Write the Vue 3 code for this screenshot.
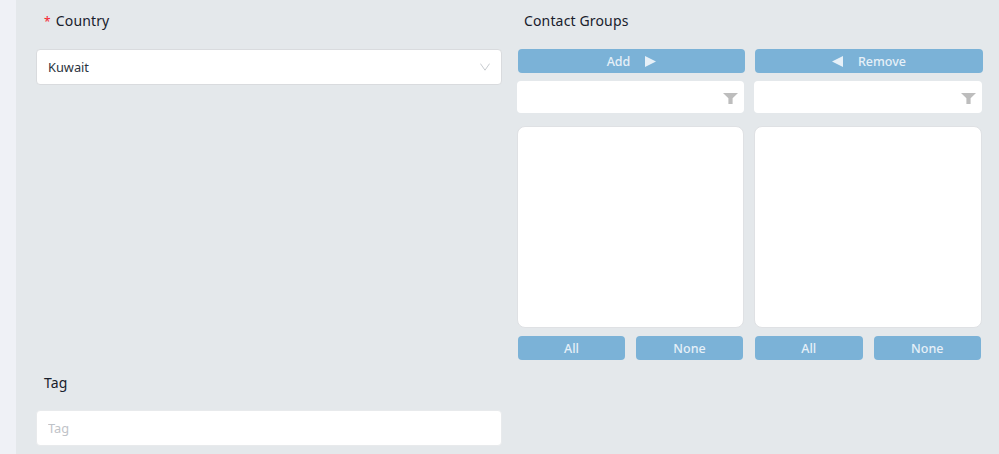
<script setup>
const panes = [
  { action: 'Add', dir: 'right' },
  { action: 'Remove', dir: 'left' },
]
</script>

<template>
  <div class="page">
    <div class="strip"></div>
    <main class="form">
      <section class="left">
        <div class="label-row country-label"><span class="req">*</span>Country</div>
        <div class="select">
          <span>Kuwait</span>
          <svg class="chev" width="10" height="8" viewBox="0 0 10 8"><path d="M.4.6 5 7.2 9.6.6" fill="none" stroke="#c8ccd0" stroke-width="1"/></svg>
        </div>
      </section>
      <section class="right">
        <div class="label-row groups-label">Contact Groups</div>
        <div class="panes">
          <div v-for="p in panes" :key="p.action" class="pane">
            <button class="btn wide">
              <template v-if="p.dir === 'right'">
                <span>{{ p.action }}</span>
                <svg width="11" height="11" viewBox="0 0 11 11"><path d="M0 0 11 5.5 0 11Z" fill="#e6f0f8"/></svg>
              </template>
              <template v-else>
                <svg width="11" height="11" viewBox="0 0 11 11"><path d="M11 0 0 5.5 11 11Z" fill="#e6f0f8"/></svg>
                <span>{{ p.action }}</span>
              </template>
            </button>
            <div class="filter">
              <svg width="15" height="11" viewBox="0 0 15 11"><path d="M0 0H15L9.6 5.2V11H5.4V5.2Z" fill="#bdbdbd"/></svg>
            </div>
            <div class="list"></div>
            <div class="pair">
              <button class="btn">All</button>
              <button class="btn">None</button>
            </div>
          </div>
        </div>
      </section>
      <section class="left tag">
        <div class="label-row tag-label">Tag</div>
        <input class="input" placeholder="Tag" />
      </section>
    </main>
  </div>
</template>

<style>
html, body { margin: 0; background: #e4e8eb; overflow: hidden; }
</style>

<style scoped>
.page {
  display: flex;
  width: 999px;
  height: 454px;
  overflow: hidden;
  background: #e4e8eb;
  color: #18202c;
  font-family: "Noto Sans", sans-serif;
}
.strip { width: 16px; flex: none; background: #eff1f6; }
.form {
  flex: 1;
  display: grid;
  grid-template-columns: 466px 466px;
  grid-template-rows: 372px auto;
  column-gap: 15px;
  padding-left: 20px;
  align-content: start;
}
.label-row { font-size: 14px; line-height: 20px; letter-spacing: 0.15px; }
.country-label { padding: 11px 0 0 8px; height: 38px; box-sizing: border-box; }
.req { color: #f5222d; font-size: 12px; margin-right: 5px; }
.groups-label { padding: 11px 0 0 7px; height: 49px; box-sizing: border-box; }
.tag-label { padding: 1px 0 0 8px; height: 38px; box-sizing: border-box; }
.select, .input {
  box-sizing: border-box;
  width: 466px;
  border-radius: 4px;
  background: #fff;
  font: 12.8px "Noto Sans", sans-serif;
  color: #2c3440;
}
.select {
  height: 36px;
  border: 1px solid #d9dbde;
  margin-top: 11px;
  display: flex;
  align-items: center;
  justify-content: space-between;
  padding: 0 11px;
}
.input {
  display: block;
  height: 36px;
  border: 1px solid #e8eaec;
  padding: 0 11px;
  outline: none;
}
.input::placeholder { color: #bfc3c8; opacity: 1; }
.panes { display: flex; gap: 10px; padding-left: 1px; }
.pane { width: 227px; display: flex; flex-direction: column; }
.pane:last-child { width: 228px; }
.btn {
  flex: 1;
  height: 24px;
  padding: 0;
  border: 0;
  border-radius: 4px;
  background: #7bb2d7;
  color: #e6f0f8;
  font: 500 12.5px "Noto Sans", sans-serif;
  display: flex;
  align-items: center;
  justify-content: center;
  gap: 15px;
}
.btn.wide { flex: none; }
.filter {
  box-sizing: border-box;
  height: 32px;
  margin: 8px 1px 0 -1px;
  border-radius: 4px;
  background: #fff;
  display: flex;
  align-items: center;
  justify-content: flex-end;
  padding: 3px 6px 0 0;
}
.list {
  box-sizing: border-box;
  height: 202px;
  margin: 13px 1px 0 -1px;
  border: 1px solid #dfe1e4;
  border-radius: 8px;
  background: #fff;
}
.pair { display: flex; gap: 11px; margin-top: 8px; margin-right: 2px; }
.tag { grid-column: 1; }
</style>
